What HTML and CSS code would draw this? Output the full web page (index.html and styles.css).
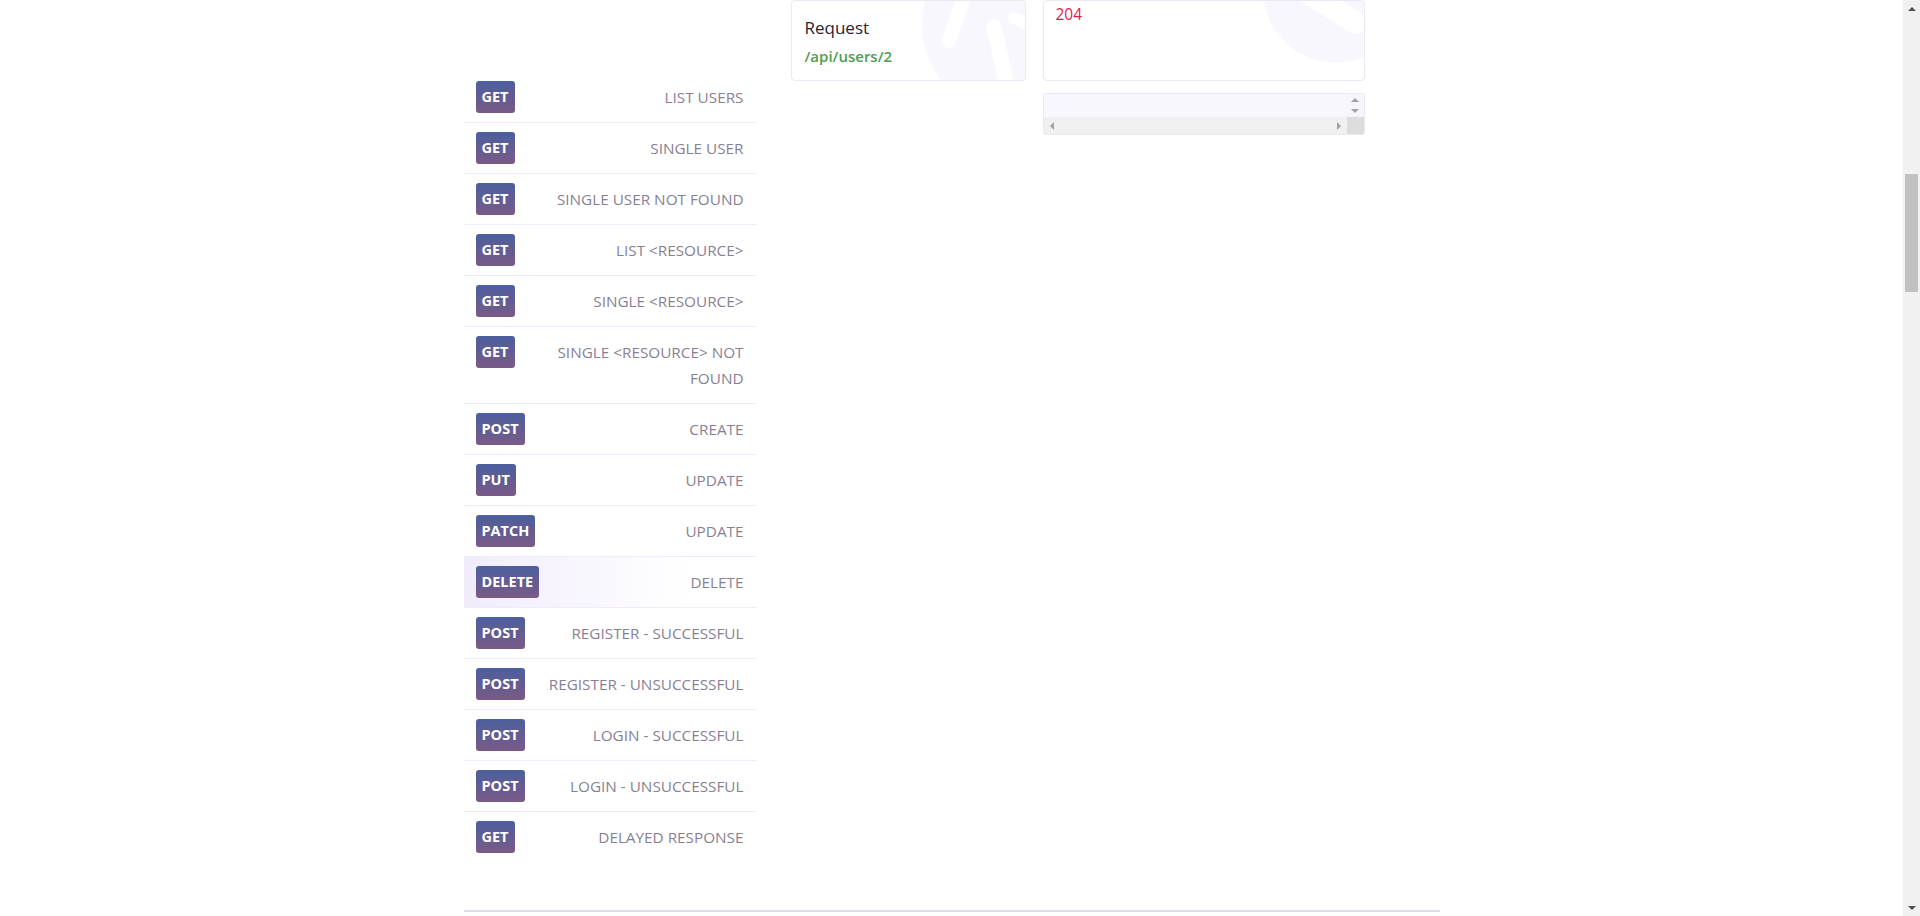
FILE: index.html
```html
<!DOCTYPE html>
<html lang="en">
<head>
<meta charset="utf-8">
<title>ReqRes console</title>
<link rel="stylesheet" href="styles.css">
</head>
<body>
<div class="page">
  <main class="wrap">
    <section class="console">
      <ul class="endpoints">
        <li class="endpoint"><span class="method">GET</span><span class="name">LIST USERS</span></li>
        <li class="endpoint"><span class="method">GET</span><span class="name">SINGLE USER</span></li>
        <li class="endpoint"><span class="method">GET</span><span class="name">SINGLE USER NOT FOUND</span></li>
        <li class="endpoint"><span class="method">GET</span><span class="name">LIST &lt;RESOURCE&gt;</span></li>
        <li class="endpoint"><span class="method">GET</span><span class="name">SINGLE &lt;RESOURCE&gt;</span></li>
        <li class="endpoint"><span class="method">GET</span><span class="name">SINGLE &lt;RESOURCE&gt; NOT FOUND</span></li>
        <li class="endpoint"><span class="method">POST</span><span class="name">CREATE</span></li>
        <li class="endpoint"><span class="method">PUT</span><span class="name">UPDATE</span></li>
        <li class="endpoint"><span class="method">PATCH</span><span class="name">UPDATE</span></li>
        <li class="endpoint active"><span class="method">DELETE</span><span class="name">DELETE</span></li>
        <li class="endpoint"><span class="method">POST</span><span class="name">REGISTER - SUCCESSFUL</span></li>
        <li class="endpoint"><span class="method">POST</span><span class="name">REGISTER - UNSUCCESSFUL</span></li>
        <li class="endpoint"><span class="method">POST</span><span class="name">LOGIN - SUCCESSFUL</span></li>
        <li class="endpoint"><span class="method">POST</span><span class="name">LOGIN - UNSUCCESSFUL</span></li>
        <li class="endpoint"><span class="method">GET</span><span class="name">DELAYED RESPONSE</span></li>
      </ul>
      <div class="output">
        <div class="panel request">
          <svg class="mark" viewBox="0 0 233 79" preserveAspectRatio="none" aria-hidden="true">
            <circle cx="218" cy="24" r="88" fill="#f9f7fe"/>
            <path d="M157 40 L172 -4" stroke="#fff" stroke-width="14" stroke-linecap="round" fill="none"/>
            <path d="M202 26 L214 80" stroke="#fff" stroke-width="15" stroke-linecap="round" fill="none"/>
            <path d="M222 17 L240 25" stroke="#fff" stroke-width="12" stroke-linecap="round" fill="none"/>
          </svg>
          <div class="panel-title">Request</div>
          <div class="url">/api/users/2</div>
        </div>
        <div class="response">
          <div class="panel code-panel">
            <svg class="mark" viewBox="0 0 320 79" preserveAspectRatio="none" aria-hidden="true">
              <circle cx="292" cy="-11" r="73" fill="#f9f7fe"/>
              <path d="M252 -16 L312 22" stroke="#fff" stroke-width="22" stroke-linecap="round" fill="none"/>
            </svg>
            <span class="status">204</span>
          </div>
          <div class="body-box">
            <pre class="body-text"></pre>
            <div class="vbar"><span class="arr arr-up"></span><span class="arr arr-down"></span></div>
            <div class="hbar"><span class="arr arr-left"></span><span class="arr arr-right"></span></div>
            <div class="corner"></div>
          </div>
        </div>
      </div>
    </section>
    <hr class="divider">
  </main>
</div>
<div class="scrollbar" aria-hidden="true">
  <span class="sb-btn"><span class="tri tri-up"></span></span>
  <span class="sb-track"><span class="sb-thumb"></span></span>
  <span class="sb-btn"><span class="tri tri-down"></span></span>
</div>
</body>
</html>
```
FILE: styles.css
```css
html, body {
  height: 100%;
}
body {
  margin: 0;
  display: flex;
  overflow: hidden;
  background: #fff;
  font-family: "Open Sans", "Liberation Sans", sans-serif;
  color: #2d2438;
}
.page {
  flex: 1;
  min-width: 0;
}
.wrap {
  width: 976px;
  margin: 0 auto;
}
.console {
  display: flex;
  align-items: flex-start;
}
.endpoints {
  list-style: none;
  margin: 72px 0 0;
  padding: 0;
  width: 292px;
  flex: none;
}
.endpoint {
  display: flex;
  align-items: flex-start;
  gap: 10px;
  padding: 12px;
  line-height: 26px;
}
.endpoint + .endpoint {
  border-top: 1px solid #efebfa;
}
.endpoint.active {
  background: linear-gradient(90deg, #f1ecfc 0%, #ffffff 78%);
}
.method {
  flex: none;
  height: 32px;
  line-height: 32px;
  margin: -3px 0;
  padding: 0 6px;
  border-radius: 3px;
  background: linear-gradient(180deg, #4b5f9e 0%, #7a5a86 100%);
  color: #fff;
  font-size: 14.5px;
  font-weight: 700;
}
.name {
  flex: 1;
  text-align: right;
  font-size: 15.3px;
  color: #887f96;
}
.output {
  display: flex;
  align-items: flex-start;
  gap: 17px;
  padding-left: 35px;
}
.panel {
  position: relative;
  overflow: hidden;
  box-sizing: border-box;
  height: 81px;
  border: 1px solid #eae8f1;
  border-radius: 4px;
  background: #fff;
}
.mark {
  position: absolute;
  left: 0;
  top: 0;
  width: 100%;
  height: 100%;
  pointer-events: none;
}
.request {
  width: 235px;
  padding: 16px 13px;
}
.panel-title,
.url,
.status {
  position: relative;
}
.panel-title {
  font-size: 17px;
  font-weight: 500;
  line-height: 22px;
  color: #2b2233;
}
.url {
  margin-top: 7px;
  font-size: 15px;
  font-weight: 600;
  line-height: 20px;
  color: #4f9d50;
}
.response {
  width: 322px;
}
.code-panel {
  padding: 2px 12px;
}
.status {
  font-size: 15.5px;
  line-height: 22px;
  color: #e01a4c;
}
.body-box {
  box-sizing: border-box;
  margin-top: 12px;
  height: 42px;
  display: grid;
  grid-template-columns: 1fr 17px;
  grid-template-rows: 23px 17px;
  border: 1px solid #eae8f1;
  border-radius: 3px;
  overflow: hidden;
  background: #f9f7fe;
}
.body-text {
  margin: 0;
}
.vbar {
  display: flex;
  flex-direction: column;
  align-items: center;
  justify-content: center;
  gap: 7px;
  background: #f7f5fc;
}
.hbar {
  display: flex;
  align-items: center;
  justify-content: space-between;
  padding: 0 6px;
  background: #f0f0f0;
}
.corner {
  background: #dcdcdc;
}
.arr {
  width: 0;
  height: 0;
  border-style: solid;
  border-color: transparent;
}
.arr-up {
  border-width: 0 4px 4px;
  border-bottom-color: #a3a3a3;
}
.arr-down {
  border-width: 4px 4px 0;
  border-top-color: #a3a3a3;
}
.arr-left {
  border-width: 4px 4px 4px 0;
  border-right-color: #a3a3a3;
}
.arr-right {
  border-width: 4px 0 4px 4px;
  border-left-color: #a3a3a3;
}
.divider {
  margin: 48px 0 0;
  border: 0;
  border-top: 2px solid #dedbe5;
}
.scrollbar {
  flex: none;
  width: 17px;
  display: flex;
  flex-direction: column;
  background: #f1f1f1;
}
.sb-btn {
  height: 17px;
  flex: none;
  display: flex;
  align-items: center;
  justify-content: center;
}
.tri {
  width: 0;
  height: 0;
  border-style: solid;
  border-color: transparent;
}
.tri-up {
  border-width: 0 4px 4px;
  border-bottom-color: #505050;
}
.tri-down {
  border-width: 4px 4px 0;
  border-top-color: #505050;
}
.sb-track {
  flex: 1;
  padding: 157px 2px 0;
}
.sb-thumb {
  display: block;
  height: 118px;
  background: #c1c1c1;
}
```
